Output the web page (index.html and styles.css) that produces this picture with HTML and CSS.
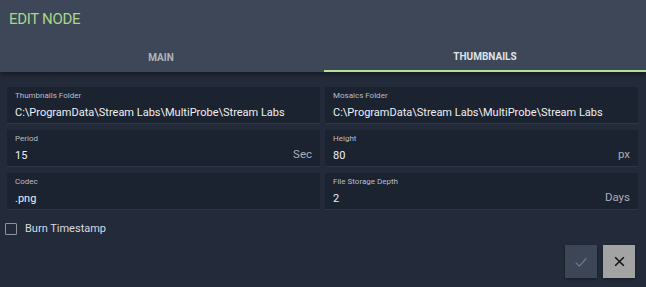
FILE: index.html
```html
<!DOCTYPE html>
<html lang="en">
<head>
    <meta charset="UTF-8">
    <title>Edit Node</title>
    <link rel="stylesheet" href="styles.css">
</head>
<body>
    <div class="dialog">
        <div class="header">
            <h1 class="title">EDIT NODE</h1>
            <div class="tabs">
                <div class="tab">MAIN</div>
                <div class="tab active">THUMBNAILS</div>
            </div>
        </div>

        <div class="fields">
            <div class="field">
                <label class="field-label">Thumbnails Folder</label>
                <div class="field-row">
                    <div class="field-value">C:\ProgramData\Stream Labs\MultiProbe\Stream Labs</div>
                </div>
            </div>
            <div class="field">
                <label class="field-label">Mosaics Folder</label>
                <div class="field-row">
                    <div class="field-value">C:\ProgramData\Stream Labs\MultiProbe\Stream Labs</div>
                </div>
            </div>
            <div class="field">
                <label class="field-label">Period</label>
                <div class="field-row">
                    <div class="field-value">15</div>
                    <span class="unit">Sec</span>
                </div>
            </div>
            <div class="field">
                <label class="field-label">Height</label>
                <div class="field-row">
                    <div class="field-value">80</div>
                    <span class="unit">px</span>
                </div>
            </div>
            <div class="field">
                <label class="field-label">Codec</label>
                <div class="field-row">
                    <div class="field-value">.png</div>
                </div>
            </div>
            <div class="field">
                <label class="field-label">File Storage Depth</label>
                <div class="field-row">
                    <div class="field-value">2</div>
                    <span class="unit">Days</span>
                </div>
            </div>
        </div>

        <label class="checkbox">
            <span class="box"></span>
            <span>Burn Timestamp</span>
        </label>

        <div class="actions">
            <button class="btn btn-ok" disabled>
                <svg width="14" height="14" viewBox="0 0 24 24"><path d="M3 13l6 6L21 6" fill="none" stroke="#727986" stroke-width="2.2"/></svg>
            </button>
            <button class="btn btn-cancel">
                <svg width="13" height="13" viewBox="0 0 24 24"><path d="M4 4l16 16M20 4L4 20" fill="none" stroke="#111" stroke-width="2.8"/></svg>
            </button>
        </div>
    </div>
</body>
</html>
```

FILE: styles.css
```css
body {
    margin: 0;
    background-color: #232b3a;
    font-family: Roboto, "Liberation Sans", sans-serif;
    color: #e4e7eb;
}
.dialog {
    width: 646px;
    height: 287px;
    overflow: hidden;
}
.header {
    background-color: #3e4757;
    height: 72px;
    box-shadow: 0 2px 5px rgba(0, 0, 0, 0.45);
    position: relative;
}
.title {
    margin: 0;
    padding: 10px 0 0 9px;
    height: 30px;
    font-size: 15px;
    font-weight: 400;
    letter-spacing: -0.3px;
    color: #a9d68c;
}
.tabs {
    display: flex;
    height: 32px;
}
.tab {
    flex: 1;
    display: flex;
    align-items: center;
    justify-content: center;
    font-size: 10px;
    font-weight: 700;
    color: #aeb4be;
    padding-top: 2px;
}
.tab.active {
    color: #dfe3e8;
    border-bottom: 2px solid #b3e39a;
    height: 28px;
    margin-left: 2px;
}
.fields {
    display: grid;
    grid-template-columns: 313px 313px;
    column-gap: 5px;
    row-gap: 7px;
    padding: 15px 0 0 7px;
}
.field {
    background-color: #1b2331;
    height: 36px;
    padding: 0 8px;
    box-shadow: 0 1px 0 #2d3646;
    display: flex;
    flex-direction: column;
}
.field-label {
    font-size: 8px;
    color: #b9bdc4;
    margin-top: 4px;
    line-height: 10px;
}
.field-row {
    display: flex;
    align-items: center;
    margin-top: 4px;
}
.field-value {
    flex: 1;
    font-size: 11px;
    color: #eef0f3;
    white-space: nowrap;
    line-height: 16px;
}
.unit {
    font-size: 11.5px;
    color: #a9aeb6;
    margin-top: -4px;
}
.checkbox {
    display: flex;
    align-items: center;
    gap: 8px;
    margin: 13px 0 0 5px;
    font-size: 11px;
    color: #d8dbe0;
}
.box {
    width: 10px;
    height: 10px;
    border: 1px solid #8c939d;
    border-radius: 1px;
}
.actions {
    display: flex;
    justify-content: flex-end;
    gap: 6px;
    margin: 10px 11px 0 0;
}
.btn {
    width: 32px;
    height: 33px;
    border: none;
    padding: 0;
    display: flex;
    align-items: center;
    justify-content: center;
    box-shadow: 0 1px 3px rgba(0, 0, 0, 0.4);
}
.btn-ok {
    background-color: #3d4656;
}
.btn-cancel {
    background-color: #a3a3a3;
}
```
